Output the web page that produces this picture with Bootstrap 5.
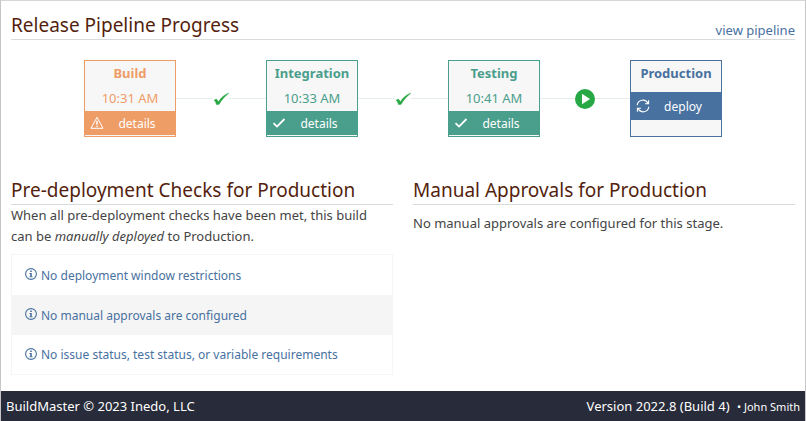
<!DOCTYPE html>
<html lang="en">
<head>
<meta charset="utf-8">
<meta name="viewport" content="width=device-width, initial-scale=1">
<title>BuildMaster</title>
<link href="https://cdn.jsdelivr.net/npm/bootstrap@5.3.0/dist/css/bootstrap.min.css" rel="stylesheet">
<style>
body { font-family: "Segoe UI", "Noto Sans", sans-serif; font-size: 13px; line-height: 21px; color: #444; background: #fff; }
a { color: #48719f; text-decoration: none; }
a:hover { text-decoration: underline; }
.frame { border: 1px solid #c6c6c6; border-top-color: #d6d6d6; border-bottom: 0; }
.main-pad { padding: 11px 10px 0; }
.section-head { border-bottom: 1px solid #d9dcdc; }
.section-head h2 { font-size: 19px; line-height: 27px; font-weight: 400; color: #541f0e; }
.view-link { line-height: 18px; }
.pipeline { padding: 20px 0 40px; }
.stage { width: 92px; height: 77px; border: 1px solid; background: #f7f7f7; }
.stage-name { font-size: 13px; line-height: 24px; font-weight: 700; }
.stage-time { line-height: 26px; }
.stage-action { color: #fff; height: 24px; padding: 0 5px; font-size: 12px; }
.stage-action:hover { color: #fff; }
.stage-warn { color: #ee9d67; border-color: #ee9d67; }
.stage-warn .stage-action { background: #ee9d67; }
.stage-ok { color: #4a9e8c; border-color: #4a9e8c; }
.stage-ok .stage-action { background: #4a9e8c; }
.stage-next { color: #48719f; border-color: #48719f; }
.stage-next .stage-action { background: #48719f; height: 28px; margin-top: 7px; }
.link-line { width: 90px; }
.link-line::before, .link-line::after { content: ""; flex: 1; height: 1px; background: #e6eeec; }
.columns { --bs-gutter-x: 20px; }
.checks { border: 1px solid #f5f5f5; margin-top: 7px; font-size: 12px; }
.checks li { height: 40px; padding-left: 13px; }
.checks li:nth-child(even) { background: #f5f5f5; }
.checks li:last-child { height: 39px; }
.checks svg { margin-bottom: 2px; }
.site-footer { background: #282b39; color: #fff; height: 30px; padding: 0 5px; }
.user { font-size: 11px; }
</style>
</head>
<body>
<svg class="d-none" aria-hidden="true">
  <symbol id="tick" viewBox="0 0 16 14"><path d="M1 8.2 3.4 7 5.4 9.7C8 6 10.8 2.6 15.7 1.2 11.6 4.4 8.6 8 6 12.4H3.4C3 10.6 2.4 8.8 1 8.2Z" fill="#28a745" stroke="#28a745" stroke-width=".5"/></symbol>
  <symbol id="check" viewBox="0 0 13 10"><path d="M1 5.2 4.5 8.6 12 1" fill="none" stroke="currentColor" stroke-width="1.8"/></symbol>
  <symbol id="info" viewBox="0 0 12 12"><circle cx="6" cy="6" r="5.4" fill="none" stroke="currentColor" stroke-width="1.1"/><path d="M5.2 2.6h1.6v1.5H5.2zM4.5 5h2.3v3.4h.8v.9H4.4v-.9h.8V5.9h-.7z" fill="currentColor"/></symbol>
</svg>
<div class="frame d-flex flex-column min-vh-100">
  <main class="flex-grow-1 main-pad">
    <section>
      <div class="section-head d-flex justify-content-between align-items-end">
        <h2 class="mb-0">Release Pipeline Progress</h2>
        <a class="view-link" href="#">view pipeline</a>
      </div>
      <div class="pipeline d-flex justify-content-center">
        <div class="stage stage-warn text-center">
          <div class="stage-name">Build</div>
          <div class="stage-time">10:31 AM</div>
          <a class="stage-action d-flex align-items-center" href="#">
            <svg width="14" height="14" viewBox="0 0 14 14" fill="none" stroke="currentColor"><path d="M7 1.3 13 12.3H1Z" stroke-linejoin="round"/><path d="M7 4.8v3.9M7 9.7v1.4" stroke-width="1.5"/></svg>
            <span class="flex-grow-1">details</span>
          </a>
        </div>
        <div class="link-line d-flex align-items-center"><svg width="16" height="14"><use href="#tick"/></svg></div>
        <div class="stage stage-ok text-center">
          <div class="stage-name">Integration</div>
          <div class="stage-time">10:33 AM</div>
          <a class="stage-action d-flex align-items-center" href="#">
            <svg width="14" height="10"><use href="#check"/></svg>
            <span class="flex-grow-1">details</span>
          </a>
        </div>
        <div class="link-line d-flex align-items-center"><svg width="16" height="14"><use href="#tick"/></svg></div>
        <div class="stage stage-ok text-center">
          <div class="stage-name">Testing</div>
          <div class="stage-time">10:41 AM</div>
          <a class="stage-action d-flex align-items-center" href="#">
            <svg width="14" height="10"><use href="#check"/></svg>
            <span class="flex-grow-1">details</span>
          </a>
        </div>
        <div class="link-line d-flex align-items-center"><svg width="20" height="20" viewBox="0 0 20 20"><circle cx="10" cy="10" r="10" fill="#28a745"/><path d="M7 4.8v10.4L15 10Z" fill="#fff"/></svg></div>
        <div class="stage stage-next text-center">
          <div class="stage-name">Production</div>
          <a class="stage-action d-flex align-items-center" href="#">
            <svg width="14" height="14" viewBox="0 0 14 14" fill="none" stroke="currentColor" stroke-width="1.1"><path d="M1.2 6.2A5.7 5.7 0 0 1 12 4.4M12.8 7.8A5.7 5.7 0 0 1 2 9.6M12.6 1.2v3.6H9M1.4 12.8V9.2H5"/></svg>
            <span class="flex-grow-1">deploy</span>
          </a>
        </div>
      </div>
    </section>
    <div class="row columns">
      <section class="col-6">
        <div class="section-head"><h2 class="mb-0">Pre-deployment Checks for Production</h2></div>
        <p class="mb-0 pe-3">When all pre-deployment checks have been met, this build can be <em>manually deployed</em> to Production.</p>
        <ul class="checks list-unstyled mb-0">
          <li class="d-flex align-items-center"><a class="d-flex align-items-center gap-1" href="#"><svg width="12" height="12"><use href="#info"/></svg>No deployment window restrictions</a></li>
          <li class="d-flex align-items-center"><a class="d-flex align-items-center gap-1" href="#"><svg width="12" height="12"><use href="#info"/></svg>No manual approvals are configured</a></li>
          <li class="d-flex align-items-center"><a class="d-flex align-items-center gap-1" href="#"><svg width="12" height="12"><use href="#info"/></svg>No issue status, test status, or variable requirements</a></li>
        </ul>
      </section>
      <section class="col-6">
        <div class="section-head"><h2 class="mb-0">Manual Approvals for Production</h2></div>
        <p class="mb-0 pt-2">No manual approvals are configured for this stage.</p>
      </section>
    </div>
  </main>
  <footer class="site-footer d-flex justify-content-between align-items-center">
    <span>BuildMaster © 2023 Inedo, LLC</span>
    <span>Version 2022.8 (Build 4) <span class="user ms-1">• John Smith</span></span>
  </footer>
</div>
<script src="https://cdn.jsdelivr.net/npm/bootstrap@5.3.0/dist/js/bootstrap.bundle.min.js"></script>
</body>
</html>
